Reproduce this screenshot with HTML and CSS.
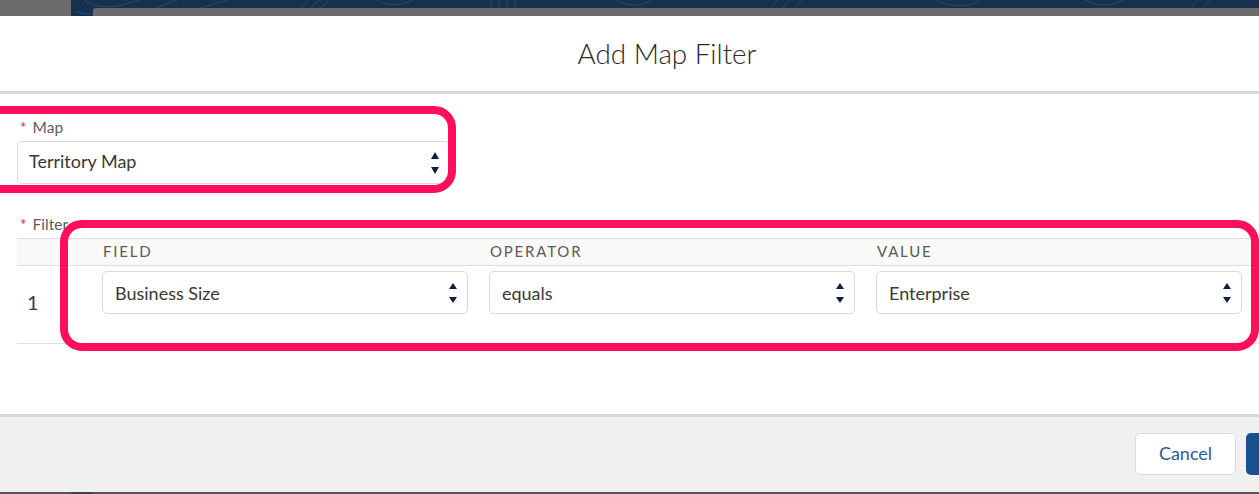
FILE: index.html
```html
<!DOCTYPE html>
<html lang="en">
<head>
<meta charset="utf-8">
<title>Add Map Filter</title>
<link rel="stylesheet" href="styles.css">
</head>
<body>
<div class="backdrop">
  <div class="bg-left"></div>
  <div class="bg-banner">
    <svg class="contours" width="1188" height="16" viewBox="0 0 1188 16" fill="none" stroke="#2f4a68" stroke-width="1">
      <path d="M5 -8c8 14 30 18 50 12s30-10 40-14"/>
      <path d="M20 -8c6 8 22 10 34 5"/>
      <path d="M85 8c15 -6 30 -12 40 -14"/>
      <path d="M5 12l12 2 6 -1"/>
      <path d="M130 8c10 -4 25 -6 35 -12"/>
      <path d="M230 8l10 -10M240 8l10 -10M250 8l10 -10"/>
      <path d="M300 -4c10 10 30 12 46 2"/>
      <path d="M420 8v-10M428 8v-10M436 8v-10M444 8v-10"/>
      <path d="M540 -4c12 12 34 12 46 0"/>
      <path d="M700 8l8 -10M712 8l8 -10M724 8l8 -10"/>
      <path d="M860 -4c14 14 44 12 54 0"/>
      <path d="M1010 -4c10 12 34 12 48 0"/>
      <path d="M1120 8l8 -10M1132 8l8 -10"/>
    </svg>
    <div class="bg-panel"></div>
  </div>
</div>
<main class="modal">
  <header class="modal-header"><h1 class="modal-title">Add Map Filter</h1></header>
  <section class="modal-body">
    <div class="field-map">
      <div class="label"><span class="req">*</span>Map</div>
      <div class="select select-map">
        <span>Territory Map</span>
        <svg class="arrows" width="8" height="22" viewBox="0 0 8 22"><path d="M4 0l4 7H0zM4 22L0 15h8z"/></svg>
      </div>
    </div>
    <div class="label label-filter"><span class="req">*</span>Filter</div>
    <div class="filter-table">
      <div class="thead">
        <div class="col-num"></div>
        <div class="th">FIELD</div>
        <div class="th">OPERATOR</div>
        <div class="th">VALUE</div>
      </div>
      <div class="tbody">
        <div class="col-num row-num">1</div>
        <div class="select"><span>Business Size</span><svg class="arrows" width="8" height="20" viewBox="0 0 8 20"><path d="M4 0l4 6H0zM4 20L0 14h8z"/></svg></div>
        <div class="select"><span>equals</span><svg class="arrows" width="8" height="20" viewBox="0 0 8 20"><path d="M4 0l4 6H0zM4 20L0 14h8z"/></svg></div>
        <div class="select"><span>Enterprise</span><svg class="arrows" width="8" height="20" viewBox="0 0 8 20"><path d="M4 0l4 6H0zM4 20L0 14h8z"/></svg></div>
      </div>
    </div>
  </section>
  <footer class="modal-footer">
    <button class="btn-cancel" type="button">Cancel</button>
    <div class="btn-save"></div>
  </footer>
</main>
<div class="bottom-strip"><div class="strip-blue"></div></div>
<div class="mark mark-map"></div>
<div class="mark mark-filter"></div>
</body>
</html>
```
FILE: styles.css
```css
* { box-sizing: border-box; }
html, body { margin: 0; padding: 0; }
body {
  width: 1259px;
  height: 494px;
  overflow: hidden;
  position: relative;
  background: #fff;
  font-family: Lato, "Open Sans", "Liberation Sans", sans-serif;
  color: #3a3836;
}
.backdrop { display: flex; height: 16px; background: #6b6b6b; }
.bg-left { width: 71px; }
.bg-banner { position: relative; flex: 1; background: #16304f; overflow: hidden; }
.contours { display: block; }
.bg-panel {
  position: absolute;
  left: 22px;
  right: 0;
  top: 8px;
  bottom: 0;
  background: #6b6b6b;
  border-top-left-radius: 3px;
}
.modal { height: 476px; display: flex; flex-direction: column; }
.modal-header {
  height: 78px;
  border-bottom: 3px solid #d9d9d9;
  display: flex;
  justify-content: center;
  padding-top: 20px;
  padding-left: 75px;
}
.modal-title {
  margin: 0;
  font-size: 27.8px;
  line-height: 36px;
  font-weight: 300;
  color: #2b2826;
}
.modal-body { height: 320px; padding: 24px 17px 0; }
.label { font-size: 15.5px; line-height: 18px; color: #5c5c5c; padding-left: 3px; }
.req { color: #c23934; margin-right: 6px; }
.select {
  height: 43px;
  background: #fff;
  border: 1px solid #d9d9d9;
  border-radius: 5px;
  display: flex;
  align-items: center;
  justify-content: space-between;
  padding: 0 10px 0 12px;
  font-size: 18px;
  color: #3a3836;
}
.arrows { fill: #0f2140; }
.field-map { width: 433px; }
.select-map { margin-top: 5px; padding-left: 11px; }
.select-map > span { position: relative; top: -2px; }
.label-filter { margin-top: 31px; }
.filter-table { width: 1242px; margin-top: 5px; }
.thead {
  display: grid;
  height: 28px;
  align-items: center;
  background: #f9f9f7;
  border-top: 1px solid #ddd;
  border-bottom: 1px solid #ddd;
}
.thead, .tbody { grid-template-columns: 64px 366px 366px 366px; column-gap: 21px; }
.th { font-size: 15px; letter-spacing: 1.8px; color: #5c5a58; padding-left: 1px; position: relative; top: -1px; }
.tbody {
  display: grid;
  height: 78px;
  padding-top: 5px;
  border-bottom: 1px solid #ddd;
  align-items: start;
}
.row-num { font-size: 20px; line-height: 24px; padding-left: 10px; padding-top: 19px; }
.modal-footer {
  flex: 1;
  background: #f0f0f0;
  border-top: 3px solid #d9d9d9;
  display: flex;
  justify-content: flex-end;
  padding-top: 16px;
  gap: 10px;
  overflow: hidden;
}
.btn-cancel {
  width: 101px;
  height: 42px;
  padding: 0 0 2px 0;
  background: #fff;
  border: 1px solid #dddbda;
  border-radius: 5px;
  color: #2a5a9c;
  font: 18px Lato, "Open Sans", "Liberation Sans", sans-serif;
}
.btn-save {
  width: 13px;
  height: 42px;
  background: #17508f;
  border-radius: 5px 0 0 5px;
}
.bottom-strip { height: 2px; background: #555; position: absolute; left: 0; right: 0; bottom: 0; }
.strip-blue { width: 22px; height: 2px; margin-left: 71px; background: #3a4354; }
.mark {
  position: absolute;
  border: 8px solid #ff0f5a;
  border-radius: 22px;
  pointer-events: none;
}
.mark-map { left: -24px; top: 106px; width: 480px; height: 87px; }
.mark-filter { left: 60px; top: 220px; width: 1199px; height: 131px; }
```
